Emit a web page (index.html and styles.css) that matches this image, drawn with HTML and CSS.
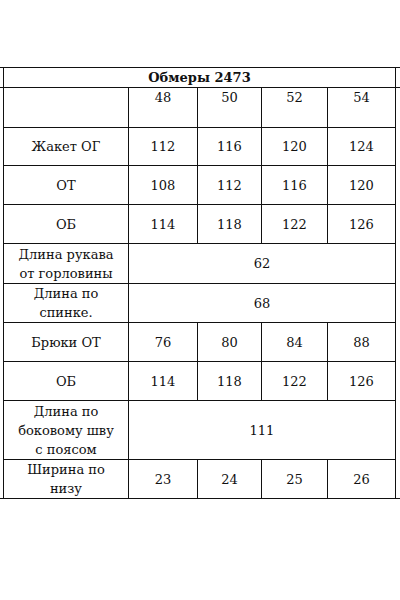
FILE: index.html
```html
<!DOCTYPE html>
<html lang="ru">
<head>
<meta charset="utf-8">
<title>Обмеры 2473</title>
<link rel="stylesheet" href="styles.css">
</head>
<body>
<div class="page">
  <div class="sheet">
    <div class="cell title">Обмеры 2473</div>

    <div class="cell size"></div>
    <div class="cell size">48</div>
    <div class="cell size">50</div>
    <div class="cell size">52</div>
    <div class="cell size">54</div>

    <div class="cell">Жакет ОГ</div>
    <div class="cell">112</div>
    <div class="cell">116</div>
    <div class="cell">120</div>
    <div class="cell">124</div>

    <div class="cell">ОТ</div>
    <div class="cell">108</div>
    <div class="cell">112</div>
    <div class="cell">116</div>
    <div class="cell">120</div>

    <div class="cell">ОБ</div>
    <div class="cell">114</div>
    <div class="cell">118</div>
    <div class="cell">122</div>
    <div class="cell">126</div>

    <div class="cell">Длина рукава<br>от горловины</div>
    <div class="cell span">62</div>

    <div class="cell">Длина по<br>спинке.</div>
    <div class="cell span">68</div>

    <div class="cell">Брюки ОТ</div>
    <div class="cell">76</div>
    <div class="cell">80</div>
    <div class="cell">84</div>
    <div class="cell">88</div>

    <div class="cell">ОБ</div>
    <div class="cell">114</div>
    <div class="cell">118</div>
    <div class="cell">122</div>
    <div class="cell">126</div>

    <div class="cell">Длина по<br>боковому шву<br>с поясом</div>
    <div class="cell span">111</div>

    <div class="cell">Ширина по<br>низу</div>
    <div class="cell">23</div>
    <div class="cell">24</div>
    <div class="cell">25</div>
    <div class="cell">26</div>
  </div>
</div>
</body>
</html>
```

FILE: styles.css
```css
html, body {
  margin: 0;
  padding: 0;
  background: #ffffff;
}

.page {
  width: 400px;
  height: 600px;
  padding: 67px 0 0 3px;
  box-sizing: border-box;
  background:
    linear-gradient(#111111, #111111) 0 67px / 100% 1px no-repeat,
    linear-gradient(#111111, #111111) 0 87px / 100% 1px no-repeat,
    linear-gradient(#111111, #111111) 0 498px / 100% 1px no-repeat,
    #ffffff;
}

.sheet {
  display: inline-grid;
  grid-template-columns: 124px 68px 63px 65px 67px;
  grid-template-rows: 19px 39px 37px 38px 38px 39px 38px 38px 38px 58px 38px;
  gap: 1px;
  padding: 1px;
  background: #111111;
  font-family: "DejaVu Serif", "Liberation Serif", serif;
  font-size: 13px;
  line-height: 19px;
  color: #111111;
}

.cell {
  background: #ffffff;
  display: flex;
  align-items: center;
  justify-content: center;
  text-align: center;
  overflow: hidden;
}

.title {
  grid-column: 1 / 6;
  font-weight: bold;
  line-height: 18px;
}

.size {
  align-items: flex-start;
}

.span {
  grid-column: 2 / 6;
}
```
